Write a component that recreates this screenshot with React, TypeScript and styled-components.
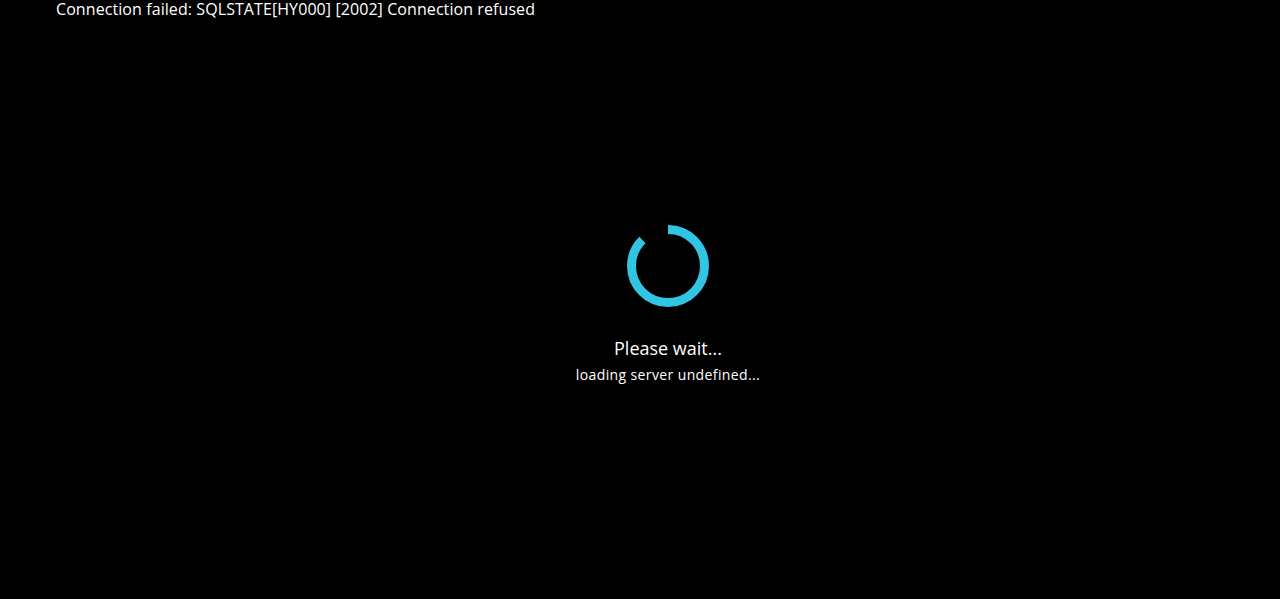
import styled, { createGlobalStyle } from "styled-components";

const GlobalStyle = createGlobalStyle`
  html, body {
    margin: 0;
    padding: 0;
    background: #000;
  }
  body {
    font-family: "Open Sans", "Liberation Sans", sans-serif;
    color: #fff;
  }
`;

const Page = styled.div`
  min-height: 100vh;
  box-sizing: border-box;
  padding-left: 56px;
  display: flex;
  flex-direction: column;
  background: #000;
`;

const ErrorLine = styled.div`
  font-size: 16px;
  line-height: 18px;
  letter-spacing: 0.08px;
  color: #fff;
  white-space: nowrap;
`;

const Center = styled.div`
  flex: 1;
  display: flex;
  flex-direction: column;
  align-items: center;
  justify-content: center;
  padding-bottom: 8px;
`;

const SpinnerBox = styled.div`
  width: 82px;
  height: 82px;
  margin-bottom: 29px;
`;

const Title = styled.div`
  font-size: 18px;
  line-height: 24px;
  color: #fff;
`;

const Sub = styled.div`
  font-size: 14px;
  line-height: 20px;
  letter-spacing: 0.38px;
  color: #fff;
  margin-top: 5px;
`;

const Spinner = () => {
  const r = 36.5;
  const c = 2 * Math.PI * r;
  const arc = c * (315 / 360);
  return (
    <SpinnerBox>
      <svg width="82" height="82" viewBox="0 0 82 82">
        <circle
          cx="41"
          cy="41"
          r={r}
          fill="none"
          stroke="#30c5e3"
          strokeWidth="9"
          strokeDasharray={`${arc} ${c}`}
          transform="rotate(-90 41 41)"
        />
      </svg>
    </SpinnerBox>
  );
};

export default function App() {
  return (
    <>
      <GlobalStyle />
      <Page>
        <ErrorLine>Connection failed: SQLSTATE[HY000] [2002] Connection refused</ErrorLine>
        <Center>
          <Spinner />
          <Title>Please wait...</Title>
          <Sub>loading server undefined...</Sub>
        </Center>
      </Page>
    </>
  );
}
